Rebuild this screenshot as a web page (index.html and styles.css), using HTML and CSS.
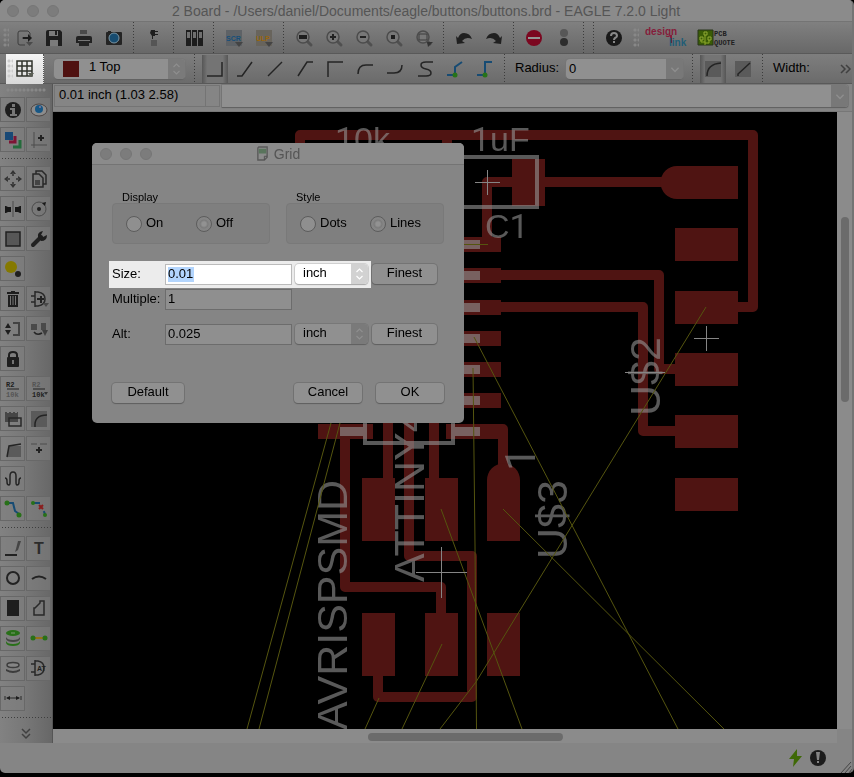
FILE: index.html
```html
<!DOCTYPE html>
<html lang="en">
<head>
<meta charset="utf-8">
<title>2 Board - EAGLE 7.2.0 Light</title>
<link rel="stylesheet" href="styles.css">
</head>
<body>
<div class="window">
  <header class="titlebar">
    <span class="lights"><i></i><i></i><i></i></span>
    <h1>2 Board - /Users/daniel/Documents/eagle/buttons/buttons.brd - EAGLE 7.2.0 Light</h1>
  </header>

  <div class="toolbar actions">
    <span class="grip"></span>
    <button aria-label="Open"><svg viewBox="0 0 20 20"><path d="M16 8V5l-2-2H6Q4 3 4 5v10q0 2 2 2h5M8 10h9" fill="none" stroke="#3d3d3d"/><path d="M9 9h5V6l4 4-4 4v-3H9z" fill="#1c1c1c"/><path d="M12 14h7l-3.500 4z" fill="#4a4a4a"/></svg></button>
    <button aria-label="Save"><svg viewBox="0 0 20 20"><path d="M2 4q0-2 2-2h12l2 2v14H2z" fill="#1e1e1e"/><path d="M5 3h9v5H5zM6 12h8v6H6z" fill="#7b7b7b"/><path d="M11 3h2v4h-2z" fill="#1e1e1e"/></svg></button>
    <button aria-label="Print"><svg viewBox="0 0 20 20"><path d="M6 2h7v4H6z" fill="#4a4a4a"/><path d="M2 10q0-2 2-2h12q2 0 2 2v5H2z" fill="#222"/><path d="M5 12h10v6H5z" fill="#242424"/><path d="M4 12h12v1H4z" fill="#777"/></svg></button>
    <button aria-label="CAM processor"><svg viewBox="0 0 20 20"><rect x="2" y="4" width="16" height="13" rx="1" fill="#242424"/><circle cx="10" cy="10" r="5" fill="#174c70" stroke="#7b96a5"/><path d="M4 3h3v2H4z" fill="#222"/></svg></button>
    <span class="sep"></span>
    <button aria-label="Schematic"><svg viewBox="0 0 20 20"><path d="M7 2h4v1h3v1h-3v2h3v1h-3v1H9v3H8V8L6 5z" fill="#1e1e1e"/><path d="M7 12h6v6H7z" fill="#555"/></svg></button>
    <span class="sep"></span>
    <button aria-label="Library"><svg viewBox="0 0 20 20"><path d="M2 2h5v16H2zM8 2h5v16H8zM14 2h5v16h-5z" fill="#1d1d1d"/><path d="M3 4h3v6H3zM9 4h3v6H9zM15 4h3v6h-3z" fill="#707070"/></svg></button>
    <span class="sep"></span>
    <button aria-label="Run script"><svg viewBox="0 0 20 20"><path d="M2 2h16v16H2z" fill="#5e6266"/><text x="2" y="13" class="chip" fill="#164f79">SCR</text><path d="M11 14h8l-4 5z" fill="#444"/></svg></button>
    <button aria-label="Run ULP"><svg viewBox="0 0 20 20"><path d="M2 2h16v16H2z" fill="#68645c"/><text x="2" y="13" class="chip" fill="#9a660c">ULP</text><path d="M11 14h8l-4 5z" fill="#444"/></svg></button>
    <span class="sep"></span>
    <button aria-label="Zoom to fit"><svg viewBox="0 0 20 20"><path d="m13 13 4 4" class="handle"/><circle cx="9" cy="9" r="6" class="lens"/><path d="M5 7h8v4H5z" fill="#1d1d1d"/></svg></button>
    <button aria-label="Zoom in"><svg viewBox="0 0 20 20"><path d="m13 13 4 4" class="handle"/><circle cx="9" cy="9" r="6" class="lens"/><path d="M9 6v6M6 9h6" class="s2"/></svg></button>
    <button aria-label="Zoom out"><svg viewBox="0 0 20 20"><path d="m13 13 4 4" class="handle"/><circle cx="9" cy="9" r="6" class="lens"/><path d="M6 9h6" class="s2"/></svg></button>
    <button aria-label="Redraw"><svg viewBox="0 0 20 20"><path d="m13 13 4 4" class="handle"/><circle cx="9" cy="9" r="6" class="lens"/><path d="M7 7h4v4H7z" fill="#1d1d1d"/></svg></button>
    <button aria-label="Zoom to selection"><svg viewBox="0 0 20 20"><path d="m13 13 3 3" class="handle"/><circle cx="9" cy="9" r="6" class="lens"/><path d="M5 6h8v6H5z" fill="none" stroke="#3c3c3c"/><path d="M13 14h6l-5 5z" fill="#333"/></svg></button>
    <span class="sep"></span>
    <button aria-label="Undo"><svg viewBox="0 0 20 20"><path d="m2 8 1 8 8-1-3-2q4-5 10-2Q16 5 10 5 6 5 4 10z" fill="#202020"/></svg></button>
    <button aria-label="Redo"><svg viewBox="0 0 20 20"><path d="m18 8-1 8-8-1 3-2Q8 8 2 11 4 5 10 5q4 0 6 5z" fill="#202020"/></svg></button>
    <span class="sep"></span>
    <button aria-label="Stop"><svg viewBox="0 0 20 20"><circle cx="10" cy="10" r="8" fill="#7b0720"/><path d="M4 9h12v2H4z" fill="#939393"/></svg></button>
    <button aria-label="Go"><svg viewBox="0 0 20 20"><circle cx="10" cy="5" r="4" fill="#575757"/><circle cx="10" cy="14" r="4" fill="#2d2d2d"/></svg></button>
    <span class="sep"></span>
    <span class="sep"></span>
    <button aria-label="Help"><svg viewBox="0 0 20 20"><circle cx="10" cy="10" r="8" fill="#191919"/><path d="M7 8q0-3 3-3t3 3q0 1-2 2-1 1-1 2" fill="none" stroke="#888" stroke-width="2"/><path d="M9 13h2v2H9z" fill="#888"/></svg></button>
    <span class="grip mid"></span>
    <a class="design" href="#design"><svg viewBox="0 0 42 22"><text x="0" y="8" class="logo" fill="#851d3b">design</text><path d="M26 8v8" stroke="#851d3b" stroke-width="2"/><text x="24" y="19" class="logo" fill="#215d76">link</text></svg></a>
    <a class="quote" href="#quote"><svg viewBox="0 0 38 16"><path d="M0 0h15v15H0z" fill="#3a5c06" stroke="#28351a"/><path d="M7 5v10M3 10v2h4M11 10v3H7" stroke="#8da82b" fill="none"/><path d="M6 2h3v3H6zM2 7h3v3H2zM10 7h3v3h-3z" fill="none" stroke="#91a934"/><text x="16" y="6" class="pixel">PCB</text><text x="16" y="15" class="pixel">QUOTE</text></svg></a>
  </div>

  <div class="toolbar options">
    <div class="spot"><span class="grip"></span><button aria-label="Grid"><svg viewBox="0 0 20 20"><path d="M2 2h15v15H2zM7 2v15M12 2v15M2 7h15M2 12h15" fill="none" stroke="#30332c" stroke-width="1.500"/><path d="M13 14h6l-3 4z" fill="#5b5f55"/></svg></button></div>
    <label class="combo layer"><i class="swatch"></i><select aria-label="Layer"><option>1 Top</option></select><svg class="updown" viewBox="0 0 10 16"><path d="m2 6 3-3 3 3M2 10l3 3 3-3"/></svg></label>
    <span class="sep"></span>
    <button class="on" aria-label="Bend 0"><svg viewBox="0 0 20 20"><path d="M2 17h15V3" class="wire"/></svg></button>
    <button aria-label="Bend 1"><svg viewBox="0 0 20 20"><path d="M2 17h5l10-14" class="wire"/></svg></button>
    <button aria-label="Bend 2"><svg viewBox="0 0 20 20"><path d="M3 17 17 3" class="wire"/></svg></button>
    <button aria-label="Bend 3"><svg viewBox="0 0 20 20"><path d="M3 17 12 3h6" class="wire"/></svg></button>
    <button aria-label="Bend 4"><svg viewBox="0 0 20 20"><path d="M3 18V3h15" class="wire"/></svg></button>
    <button aria-label="Bend 5"><svg viewBox="0 0 20 20"><path d="M3 15q0-9 8-9h7" class="wire"/></svg></button>
    <button aria-label="Bend 6"><svg viewBox="0 0 20 20"><path d="M2 14h7q8 0 8-8" class="wire"/></svg></button>
    <button aria-label="Bend 7"><svg viewBox="0 0 20 20"><path d="M18 3h-7Q6 3 6 6t5 4q5 1 5 4 0 3-5 3H3" class="wire"/></svg></button>
    <button aria-label="Bend 8"><svg viewBox="0 0 20 20"><path d="M2 16h8V8l7-5" class="wire blue"/><circle cx="10" cy="16" r="2.500" fill="#277318"/></svg></button>
    <button aria-label="Bend 9"><svg viewBox="0 0 20 20"><path d="M2 16h8V3h7" class="wire blue"/><circle cx="10" cy="16" r="2.500" fill="#277318"/></svg></button>
    <span class="sep"></span>
    <label class="caption" for="radius">Radius:</label>
    <div class="combo radius"><input id="radius" value="0"><button class="down" aria-label="Radius values"><svg viewBox="0 0 10 10"><path d="m2 4 3 3 3-3"/></svg></button></div>
    <span class="sep"></span>
    <button class="on" aria-label="Round corner"><svg viewBox="0 0 20 20"><path d="M2 2h16v16H2z" class="plate"/><path d="M4 17Q4 5 18 4" class="wire"/></svg></button>
    <button aria-label="Straight corner"><svg viewBox="0 0 20 20"><path d="M2 2h16v16H2z" class="plate"/><path d="M5 17V15L17 4" class="wire"/></svg></button>
    <span class="sep"></span>
    <span class="caption">Width:</span>
    <button class="more" aria-label="More tools"><svg viewBox="0 0 12 10"><path d="m2 1 4 4-4 4M7 1l4 4-4 4"/></svg></button>
  </div>

  <div class="work">
    <nav class="sidebar" aria-label="Tools">
      <span class="grip wide"></span>
      <div class="tools">
        <button aria-label="Info"><svg viewBox="0 0 20 20"><circle cx="10" cy="10" r="8" class="k"/><path d="M9 4h3v3H9zM7 8h5v6h2v2H7v-2h2v-4H7z" fill="#777"/></svg></button>
        <button aria-label="Show"><svg viewBox="0 0 20 20"><ellipse cx="10" cy="10" rx="8" ry="6" fill="#8c8c8c" stroke="#4c4543"/><circle cx="10" cy="9" r="4" fill="#175785"/><circle cx="11" cy="7" r="1" fill="#879"/></svg></button>
        <button aria-label="Layers"><svg viewBox="0 0 20 20"><path d="M2 2h8v8H2z" fill="#194976"/><path d="M12 6v6H6" fill="none" stroke="#7d1534" stroke-width="3"/><path d="M17 10v7h-7" fill="none" stroke="#246b3b" stroke-width="3"/></svg></button>
        <button aria-label="Mark"><svg viewBox="0 0 20 20"><path d="M5 2v16M2 15h16" stroke="#4c4c4c" fill="none"/><path d="M12 5v6M9 8h6" class="s2"/></svg></button>
      </div>
      <span class="rule"></span>
      <div class="tools">
        <button aria-label="Move"><svg viewBox="0 0 20 20"><path d="m10 1 3 4H7zM10 19l3-4H7zM1 10l4-3v6zM19 10l-4-3v6z" fill="#333"/><path d="M10 4v3M10 13v3M4 10h3M13 10h3" stroke="#444" stroke-width="2"/></svg></button>
        <button aria-label="Copy"><svg viewBox="0 0 20 20"><path d="M7 5V2h6l4 4v9h-3" class="o"/><path d="M4 5h6l4 4v9H4z" class="o"/><path d="M6 11h5v5H6z" fill="#444"/></svg></button>
        <button aria-label="Mirror"><svg viewBox="0 0 20 20"><path d="M10 2v16" stroke="#4b4b4b"/><path d="M2 7h1l2 1h3v5H5l-2 1H2zM18 7h-1l-2 1h-3v5h3l2 1h1z" fill="#171717"/></svg></button>
        <button aria-label="Rotate"><svg viewBox="0 0 20 20"><circle cx="10" cy="10" r="7" fill="none" stroke="#4b4b4b"/><circle cx="10" cy="10" r="2" class="k"/><path d="m13 4 4-1-1 4z" fill="#191919"/></svg></button>
        <button aria-label="Group"><svg viewBox="0 0 20 20"><path d="M3 3h14v14H3z" fill="#575757" stroke="#202020" stroke-width="1.500"/></svg></button>
        <button aria-label="Change"><svg viewBox="0 0 20 20"><path d="M4 16 12 8" stroke="#222" stroke-width="4" stroke-linecap="round"/><path d="M9 8q-1-5 5-6l-2 4 2 2 4-2q0 6-6 6z" class="k"/></svg></button>
        <button aria-label="Paste"><svg viewBox="0 0 20 20"><circle cx="8" cy="8" r="6" fill="#857900"/><circle cx="15" cy="15" r="3" fill="#1e1e1e"/></svg></button>
        <i></i>
        <button aria-label="Delete"><svg viewBox="0 0 20 20"><path d="M5 6h10v12H5zM4 3h12v2H4zM8 2h4v2H8z" class="k"/><path d="M7.500 7v9M10 7v9M12.500 7v9" stroke="#747474"/></svg></button>
        <button aria-label="Add"><svg viewBox="0 0 20 20"><path d="M6 2v16M6 3h3q7 1 7 7t-7 7H6M2 7h4M2 13h4" class="o"/><path d="M12 7v7M8 10h7" class="s2"/><path d="M14 14h6l-3 4z" fill="#484848"/></svg></button>
        <button aria-label="Pin swap"><svg viewBox="0 0 20 20"><path d="m5 4 3 5H2zM5 16l3-5H2z" class="k"/><path d="M10 4h6v12h-6" fill="none" stroke="#424242" stroke-width="2"/></svg></button>
        <button aria-label="Replace"><svg viewBox="0 0 20 20"><path d="M2 5h6v6H2zM12 4h5v7h-5z" fill="#4a4a4a"/><path d="M5 13q3 4 8 1" class="wire"/><path d="M13 11h6l-3 6z" fill="#3f3f3f"/></svg></button>
        <button aria-label="Lock"><svg viewBox="0 0 20 20"><path d="M6 9V6q0-3 4-3t4 3v3" fill="none" stroke="#1d1d1d" stroke-width="2"/><rect x="4" y="8" width="12" height="10" rx="1" class="k"/><path d="M9 11h2v4H9z" fill="#737373"/></svg></button>
        <i></i>
        <button aria-label="Name"><svg viewBox="0 0 20 20"><text x="3" y="8" class="pixel">R2</text><path d="M4 10h12" class="s1"/><text x="3" y="18" class="pixel pale">10k</text></svg></button>
        <button aria-label="Value"><svg viewBox="0 0 20 20"><text x="3" y="8" class="pixel pale">R2</text><path d="M4 10h12" class="s1"/><text x="3" y="18" class="pixel">10k</text><path d="M15 13h4l-2 3z" fill="#333"/></svg></button>
        <button aria-label="Smash"><svg viewBox="0 0 20 20"><path d="M2 3h2v1h2V3h2v1h2V3h2v1h2V3h1v10H2z" fill="#464646"/><path d="M6 9h12v8H6z" class="o"/></svg></button>
        <button aria-label="Miter"><svg viewBox="0 0 20 20"><path d="M2 2h16v16H2z" class="plate"/><path d="M6 18Q5 6 18 6" class="wire"/></svg></button>
        <button aria-label="Split"><svg viewBox="0 0 20 20"><path d="M6 7h12v11H4z" class="plate"/><path d="M4 18 6 7l12-2" class="wire"/></svg></button>
        <button aria-label="Optimize"><svg viewBox="0 0 20 20"><path d="M2 5h6M11 5h7" stroke="#4c4c4c"/><path d="M10 8v6M7 11h6" class="s2"/></svg></button>
        <button aria-label="Meander"><svg viewBox="0 0 20 20"><path d="M2 9q2 0 2 3v1q0 3 2 3 1 0 1-3V7q0-4 3-4t3 4v6q0 3 1 3 2 0 2-3v-1q0-3 2-3" class="wire"/></svg></button>
        <i></i>
        <button aria-label="Route"><svg viewBox="0 0 20 20"><path d="M4 4h6l2 8 4 3" class="wire blue"/><circle cx="4" cy="4" r="2.500" class="g"/><circle cx="16" cy="16" r="2.500" class="g"/></svg></button>
        <button aria-label="Rip up"><svg viewBox="0 0 20 20"><path d="M4 4h7l5 11" class="wire blue" stroke-dasharray="7 9"/><circle cx="4" cy="4" r="2" class="g"/><circle cx="16" cy="16" r="2" class="g"/><path d="m10 6 4 4M14 6l-4 4" stroke="#8a1d1d" stroke-width="2"/></svg></button>
      </div>
      <span class="rule"></span>
      <div class="tools">
        <button aria-label="Line"><svg viewBox="0 0 20 20"><path d="M2 17h12" class="s2"/><path d="m12 14 1-3 2-8h3l-3 9z" fill="#454545"/></svg></button>
        <button aria-label="Text"><svg viewBox="0 0 20 20"><text x="5" y="16" class="tee">T</text></svg></button>
        <button aria-label="Circle"><svg viewBox="0 0 20 20"><circle cx="10" cy="10" r="6" fill="none" stroke="#222" stroke-width="2"/></svg></button>
        <button aria-label="Arc"><svg viewBox="0 0 20 20"><path d="M3 11q7-5 14 0" fill="none" stroke="#222" stroke-width="2"/></svg></button>
        <button aria-label="Rectangle"><svg viewBox="0 0 20 20"><path d="M4 2h12v16H4z" class="k"/></svg></button>
        <button aria-label="Polygon"><svg viewBox="0 0 20 20"><path d="M5 17V10h1l5-5V3h4v14z" class="o"/></svg></button>
        <button aria-label="Via"><svg viewBox="0 0 20 20"><path d="M3 13q1 3 7 3t7-3v2q-1 3-7 3t-7-3z" class="g"/><path d="M3 9q1 3 7 3t7-3v2q-1 3-7 3t-7-3z" fill="#444"/><ellipse cx="10" cy="5" rx="7" ry="3" class="g"/><path d="M8 5h4" stroke="#7b9a70"/></svg></button>
        <button aria-label="Signal"><svg viewBox="0 0 20 20"><path d="M4 10h12" stroke="#947216" stroke-width="2"/><circle cx="4" cy="10" r="2.500" class="g"/><circle cx="16" cy="10" r="2.500" class="g"/></svg></button>
        <button aria-label="Hole"><svg viewBox="0 0 20 20"><ellipse cx="10" cy="7" rx="6" ry="2.500" fill="#858585" stroke="#3c3c3c" stroke-width="1.500"/><path d="M3 11q7 4 14 0v2q-7 4-14 0z" fill="#3c3c3c"/></svg></button>
        <button aria-label="Attribute"><svg viewBox="0 0 20 20"><path d="M6 2v16M6 3h3q6 1 6 7t-6 7H6M2 6h4M2 14h4" class="o"/><text x="8" y="13" class="attr">AT</text></svg></button>
        <button aria-label="Dimension"><svg viewBox="0 0 20 20"><path d="M2 8v4M18 8v4M4 10h12" stroke="#292929"/><path d="m3 10 4-2v4zM17 10l-4-2v4z" class="k"/></svg></button>
      </div>
      <span class="rule"></span>
      <button class="expand" aria-label="Show more"><svg viewBox="0 0 10 12"><path d="m1 1 4 4 4-4M1 6l4 4 4-4"/></svg></button>
    </nav>

    <main class="editor">
      <div class="command">
        <output class="coords">0.01 inch (1.03 2.58)</output>
        <span class="cell"></span>
        <div class="combo line"><input aria-label="Command"><button class="down" aria-label="History"><svg viewBox="0 0 10 10"><path d="m2 4 3 3 3-3"/></svg></button></div>
      </div>
      <div class="view">
        <svg class="board" viewBox="53 112 784 617" preserveAspectRatio="xMinYMin slice" role="img" aria-label="Board layout">
          <g class="copper">
            <path d="M300 150V135H753V307H738M447 135V160M487 245V182H670M480 275H659V369H675M480 307H643V431H675"/>
            <path d="M345 431V587H441V613M388 420V478M409 420V556H472V697H378V676M434 420V478M480 429H503V470"/>
          </g>
          <g class="pads">
            <path d="M512 159h33v47h-33zM738 166v33H677a16.500 16.500 0 0 1 0-33z"/>
            <path d="M675 228h63v33h-63zM675 291h63v33h-63zM675 353h63v33h-63zM675 415h63v33h-63zM675 478h63v33h-63z"/>
            <path d="M446 237h55v15h-55zM446 268h55v15h-55zM446 300h55v15h-55zM446 331h55v15h-55zM446 362h55v15h-55zM446 393h55v15h-55zM446 424h55v15h-55zM318 424h55v15h-55z"/>
            <path d="M362 478h33v63h-33zM425 478h33v63h-33zM487 541V480a16.500 16.500 0 0 1 33 0v61zM362 613h33v63h-33zM425 613h33v63h-33zM487 613h33v63h-33z"/>
          </g>
          <g class="silk">
            <path d="M460 157H537V207H460M365 420V443H453V420" fill="none" stroke-width="4"/>
            <path class="pins" d="M452 240h28v9h-28zM452 271h28v9h-28zM452 303h28v9h-28zM452 334h28v9h-28zM452 365h28v9h-28zM452 396h28v9h-28zM455 427h25v9h-25zM340 427h23v9h-23z"/>
            <text x="335" y="151" font-size="34"><tspan class="one">1</tspan>0k</text>
            <text x="471" y="151" font-size="34"><tspan class="one">1</tspan>uF</text>
            <text x="485" y="238" font-size="34">C<tspan class="one">1</tspan></text>
            <text transform="translate(347 730) rotate(-90)">AVRISPSMD</text>
            <text transform="translate(424 582) rotate(-90)">ATTINY44</text>
            <text transform="translate(567 559) rotate(-90)">U$3</text>
            <text transform="translate(660 416) rotate(-90)">U$2</text>
            <text transform="translate(535 471) rotate(-90)" class="one">1</text>
          </g>
          <path class="air" d="M331 423 247 729M340 423 259 729M473 368 475 545 476.500 729M474 337 678 729M706 307 476 682 440 729M503 509 724 729M441 509 522 729M442 644 402 729M379 698 365 729M464 244.500H488"/>
          <path class="origin" d="M475 182.500h25M487.500 170v25M694 338.500h25M706.500 326v25M416 572.500h51M441.500 547v51M625 372.500h40"/>
        </svg>
        <div class="vscroll"><i></i></div>
      </div>
      <div class="hscroll"><i></i></div>

      <section class="dialog" role="dialog" aria-labelledby="grid-title">
        <header class="dialog-bar">
          <span class="lights"><i></i><i></i><i></i></span>
          <h2 id="grid-title"><svg viewBox="0 0 14 18"><path d="M3 2h9v11l-3 3H2V3z" fill="#8b8b8b" stroke="#5a5a5a" stroke-width="1.500"/><path d="M3 4h8v5H3z" fill="#59745c"/><path d="M12 12H9v4" fill="none" stroke="#505050"/></svg>Grid</h2>
        </header>
        <form class="grid-form">
          <div class="groups">
            <fieldset><legend>Display</legend>
              <div class="radios"><label><input type="radio" name="display">On</label><label><input type="radio" name="display" checked>Off</label></div>
            </fieldset>
            <fieldset><legend>Style</legend>
              <div class="radios"><label><input type="radio" name="style">Dots</label><label><input type="radio" name="style" checked>Lines</label></div>
            </fieldset>
          </div>
          <div class="row">
            <div class="fields lit"><label for="size">Size:</label><div class="entry"><span class="sel"></span><input id="size" value="0.01"></div>
              <span class="combo unit"><select aria-label="Size unit"><option>inch</option></select><svg class="updown" viewBox="0 0 10 16"><path d="m2 6 3-3 3 3M2 10l3 3 3-3"/></svg></span></div>
            <button type="button" class="push">Finest</button>
          </div>
          <div class="row">
            <div class="fields"><label for="multiple">Multiple:</label><div class="entry"><input id="multiple" value="1"></div></div>
          </div>
          <div class="row alt">
            <div class="fields"><label for="alt">Alt:</label><div class="entry"><input id="alt" value="0.025"></div>
              <span class="combo unit"><select aria-label="Alt unit"><option>inch</option></select><svg class="updown" viewBox="0 0 10 16"><path d="m2 6 3-3 3 3M2 10l3 3 3-3"/></svg></span></div>
            <button type="button" class="push">Finest</button>
          </div>
          <div class="buttons">
            <button type="button" class="push first">Default</button>
            <button type="button" class="push">Cancel</button>
            <button type="button" class="push">OK</button>
          </div>
        </form>
      </section>
    </main>
  </div>

  <footer class="status">
    <svg viewBox="0 0 20 20"><path d="M11 1 3 11h5l-1 8 9-11h-5z" fill="#3f6906"/></svg>
    <svg viewBox="0 0 20 20"><circle cx="10" cy="10" r="8" fill="#1c1c1c"/><path d="M8 4h4l-1 8H9zM9 13h2v2H9z" fill="#858585"/></svg>
    <svg class="resize" viewBox="0 0 12 12"><path d="M1 12 11 1M5 12l6-7M9 12l3-4" stroke="#454545" fill="none"/></svg>
  </footer>
</div>
</body>
</html>
```
FILE: styles.css
```css
* { box-sizing: border-box; }
body {
  margin: 0;
  padding-bottom: 4px;
  min-height: 100vh;
  display: flex;
  background: #000;
  color: #000;
  font: 13px/16px "Liberation Sans", Arial, sans-serif;
}
button, input, select { font: inherit; color: inherit; margin: 0; padding: 0; border: 0; background: none; }
h1, h2 { margin: 0; font-size: 14px; font-weight: 400; color: #555; }
button { display: grid; place-items: center; }
svg { display: block; overflow: visible; }
button svg { width: 20px; height: 20px; }

.window {
  flex: 1;
  min-width: 0;
  display: flex;
  flex-direction: column;
  background: #858585;
  border-right: 2px solid #747474;
  border-radius: 5px;
  overflow: hidden;
}
.titlebar, .dialog-bar {
  position: relative;
  display: flex;
  align-items: center;
  justify-content: center;
  height: 22px;
  background: #8b8b8b;
  border-bottom: 1px solid #747474;
}
.titlebar h1 { white-space: nowrap; }
.lights { position: absolute; left: 7px; display: flex; gap: 8px; }
.lights i { width: 12px; height: 12px; border-radius: 50%; background: #7c7c7c; border: 1px solid #767676; }

.toolbar {
  display: flex;
  align-items: center;
  height: 32px;
  background: linear-gradient(#808080, #686868);
  border-bottom: 1px solid #595959;
}
.toolbar > button { width: 30px; height: 28px; flex: none; }
.options { height: 30px; background: linear-gradient(#7e7e7e, #6b6b6b); }
.sep { flex: none; width: 10px; align-self: stretch; border-left: 4px solid transparent; }
.sep::after { content: ""; display: block; width: 1px; height: 100%; background: repeating-linear-gradient(#3c3c3c 0 1px, transparent 1px 3px); }
.grip { flex: none; width: 6px; height: 20px; margin-left: 3px; background: radial-gradient(circle at 2px 2px, #888 1px, transparent 2px) 0 0 / 4px 5px; }
.grip.mid { margin: 0 6px 0 4px; }
.chip { font: bold 7px "Liberation Sans", sans-serif; }
.handle { stroke: #505050; stroke-width: 3; fill: none; stroke-linecap: round; }
.lens { fill: #777; stroke: #4c4c4c; stroke-width: 1.5; }
.s1 { stroke: #222; fill: none; }
.s2 { stroke: #222; stroke-width: 2; fill: none; }
.k { fill: #1e1e1e; }
.g { fill: #287018; }
.o { fill: none; stroke: #292929; stroke-width: 1.5; }
.wire { fill: none; stroke: #242424; stroke-width: 1.5; }
.blue { stroke: #174b73; stroke-width: 2; }
.plate { fill: #5a5a5a; }
.pixel { font: bold 7px "Liberation Mono", monospace; fill: #202020; }
.pale { fill: #555; }
.tee { font: bold 16px "Liberation Sans", sans-serif; fill: #2b2b2b; }
.attr { font: bold 7px "Liberation Sans", sans-serif; fill: #202020; }
.design svg { width: 42px; height: 22px; }
.quote { margin-left: 11px; }
.quote svg { width: 38px; height: 16px; }
.logo { font: bold 10px "Liberation Sans", sans-serif; }

.spot {
  display: flex;
  align-items: center;
  width: 38px;
  height: 30px;
  margin: 0 10px 0 6px;
  padding-right: 4px;
  background: linear-gradient(#f5f5f5, #d9d9d9);
  border-right: 1px dotted #555;
}
.spot .grip { margin-left: 1px; filter: brightness(1.500); }
.spot button { width: 24px; }
.combo { position: relative; display: flex; align-items: center; background: #909090; border-radius: 4px; box-shadow: 0 1px 1px #606060, 0 0 0 1px #787878; height: 20px; }
.combo select { appearance: none; flex: 1; min-width: 0; height: 100%; padding: 0 20px 3px 8px; outline: 0; }
.updown { position: absolute; right: 0; width: 17px; height: 100%; padding: 2px 0; background: #7a7a7a; border-radius: 0 4px 4px 0; pointer-events: none; }
.updown path, .down path { fill: none; stroke: #8e8e8e; stroke-width: 1.2; }
.layer { width: 131px; margin-right: 5px; }
.swatch { width: 16px; height: 16px; margin-left: 9px; background: #4f1110; }
.layer select { padding-left: 10px; }
.on { background: linear-gradient(90deg, #565656, #747474 20%, #747474 80%, #565656) center / 26px 100% no-repeat; }
.caption { flex: none; margin: 0 7px 2px 6px; }
.radius { width: 117px; margin-right: 5px; }
.options .caption { margin-left: 5px; }
.combo input { flex: 1; min-width: 0; height: 100%; padding: 0 3px 1px; outline: 0; }
.down { width: 17px; height: 100%; background: #787878; border-radius: 0 3px 3px 0; }
.down svg { width: 12px; height: 12px; }
.toolbar > .more { margin-left: auto; width: 14px; }
.more svg { width: 12px; height: 10px; }
.more path, .expand path { fill: none; stroke: #404040; stroke-width: 1.5; }

.work { flex: 1; display: flex; min-height: 0; }
.sidebar {
  width: 53px;
  flex: none;
  display: flex;
  flex-direction: column;
  gap: 5px;
  height: 659px;
  overflow: hidden;
  background: linear-gradient(90deg, #828282, #777 50%, #676767);
  border-right: 1px solid #555;
}
.grip.wide { width: 40px; height: 4px; margin: 4px 6px 0; }
.tools { display: grid; grid-template-columns: 25px 25px; gap: 5px 1px; }
.tools button { height: 25px; background: rgba(128, 128, 128, .5); border: 1px solid #686868; }
.rule { height: 5px; background: repeating-linear-gradient(90deg, #3e3e3e 0 1px, transparent 1px 3px) 2px 1px / 100% 1px no-repeat; }
.expand { height: 20px; }
.expand svg { width: 10px; height: 12px; }

.editor { position: relative; flex: 1; min-width: 0; display: flex; flex-direction: column; }
.command { display: flex; align-items: center; height: 28px; padding: 0 4px 4px 1px; border-bottom: 1px solid #777; }
.coords { width: 152px; height: 22px; padding: 1px 4px; border: 1px solid #747474; }
.cell { width: 14px; height: 22px; border: 1px solid #747474; border-left: 0; margin-right: 2px; }
.line { flex: 1; height: 22px; border-radius: 0 3px 3px 0; }
.view { flex: 1; display: flex; min-height: 0; background: #000; }
.board { flex: 1; min-width: 0; height: 617px; overflow: hidden; }
.vscroll { width: 15px; flex: none; padding: 105px 3px 0 4px; background: #8b8b8b; }
.vscroll i { display: block; height: 185px; border-radius: 4px; background: #6b6b6b; }
.hscroll { height: 14px; margin-right: 15px; padding: 4px 0 0 2px; background: #8b8b8b; }
.hscroll i { display: block; width: 25%; height: 8px; margin-left: 40%; border-radius: 4px; background: #6b6b6b; }

.copper path { fill: none; stroke: #4f1412; stroke-width: 10; stroke-linejoin: round; stroke-linecap: round; }
.pads { fill: #4f1412; }
.silk { fill: #949494; stroke: none; opacity: .6; font: 43px "Liberation Sans", Arial, sans-serif; }
.silk path { stroke: #949494; }
.silk .pins { stroke: none; }
.one { font-family: Roboto, sans-serif; }
.air { fill: none; stroke: #55550f; }
.origin { fill: none; stroke: #858585; }

.dialog { position: absolute; left: 39px; top: 59px; width: 372px; height: 280px; background: #858585; border-radius: 5px; overflow: hidden; }
.dialog-bar .lights { left: 8px; }
.dialog-bar h2 { display: flex; align-items: center; gap: 5px; }
.dialog-bar svg { width: 13px; height: 17px; }
.grid-form { padding: 26px 20px 0; }
.groups { display: flex; gap: 16px; margin-bottom: 20px; }
fieldset { position: relative; flex: 1; min-width: 0; margin: 0; padding: 0; border: 0; }
legend { padding: 0 10px; font-size: 11px; line-height: 12px; }
.radios { display: flex; height: 41px; padding: 0 13px 2px; align-items: center; background: #7f7f7f; border: 1px solid #797979; border-radius: 4px; }
.radios label { display: flex; align-items: center; gap: 4px; width: 70px; flex: none; }
.radios input { appearance: none; width: 16px; height: 16px; position: relative; top: 1px; border-radius: 50%; border: 1px solid #5c5c5c; background: #8f8f8f; }
.radios input:checked { background: radial-gradient(circle, #929292 2px, #7a7a7a 4px, #858585 5px); }
.row { display: flex; gap: 4px; height: 21px; margin-bottom: 4px; }
.fields { display: grid; grid-template-columns: 50px 127px 73px; column-gap: 3px; width: 256px; }
.fields label { line-height: 19px; }
.entry { position: relative; background: #8f8f8f; border: 1px solid #6c6c6c; }
.entry input { position: relative; width: 100%; height: 100%; padding: 0 2px 2px; outline: 0; }
.unit { height: 20px; }
.lit { background: #ececec; box-shadow: 0 0 0 3px #ececec; }
.lit .entry { background: #fff; border-color: #bbb; }
.sel { position: absolute; left: 2px; top: 2px; width: 26px; height: 15px; background: #b3d5fd; }
.lit .combo { background: #fff; box-shadow: 0 1px 1px #aaa, 0 0 0 1px #d0d0d0; }
.lit .updown { background: #d2d2d2; }
.lit .updown path { stroke: #fff; }
.alt { margin-top: 14px; }
.push { width: 65px; height: 20px; padding-bottom: 3px; background: #909090; border-radius: 4px; box-shadow: 0 1px 1px #606060, 0 0 0 1px #747474; }
.buttons { display: flex; gap: 14px; margin-top: 38px; }
.buttons .push { width: 68px; }
.buttons .first { width: 72px; margin-right: auto; }

.status { display: flex; align-items: center; justify-content: flex-end; gap: 2px; height: 30px; }
.status svg { width: 20px; height: 20px; }
.status .resize { width: 12px; height: 12px; align-self: flex-end; margin-left: 10px; }
```
